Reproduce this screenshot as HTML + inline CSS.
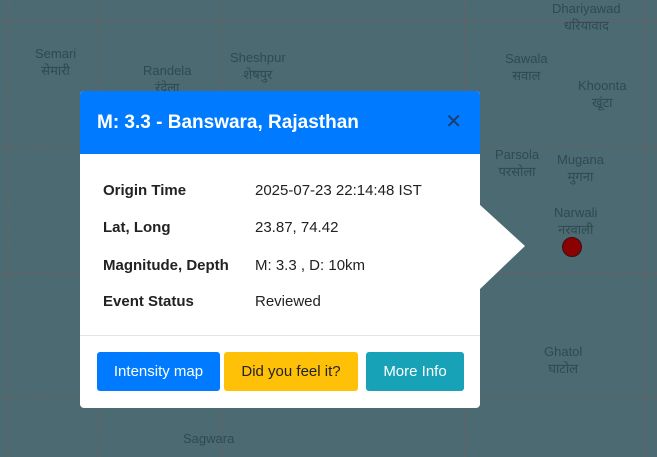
<!DOCTYPE html>
<html><head><style>
html,body{margin:0;width:657px;height:457px;overflow:hidden}
body{background:#4c6a72;font-family:"Liberation Sans","Noto Sans CJK SC",sans-serif;position:relative}
.vl{position:absolute;top:0;height:457px;border-left:1px dashed rgba(150,80,80,0.55)}
.hl{position:absolute;left:0;width:657px;border-top:1px dashed rgba(150,80,80,0.55)}
.lbl{position:absolute;color:#2f4a50;font-size:13px;text-align:center;line-height:17px}
.pop{position:absolute;left:80px;top:91px;width:400px;height:317px;background:#fff;border-radius:4px}
.hd{height:63px;background:#007bff;border-radius:4px 4px 0 0;color:#fff;font-weight:bold;font-size:19px;line-height:63px;padding-left:17px;position:relative}
.x{position:absolute;right:18px;top:0;color:#1b3d6a;font-size:20px;font-weight:normal}
.row{position:absolute;left:23px;font-size:15px;color:#222}
.row b{display:inline-block;width:152px}
.ft{position:absolute;left:0;top:244px;width:400px;border-top:1px solid #e3e3e3}
.btn{position:absolute;top:261px;height:39px;line-height:39px;border-radius:3px;font-size:15px;text-align:center}
</style></head><body>
<div class="vl" style="left:99px"></div><div class="vl" style="left:221px"></div><div class="vl" style="left:464px"></div><div class="vl" style="left:645px"></div><div class="vl" style="left:8px"></div>
<div class="hl" style="top:21px"></div><div class="hl" style="top:147px"></div><div class="hl" style="top:272px"></div><div class="hl" style="top:397px"></div>
<div class="lbl" style="left:35px;top:45px">Semari<br>सेमारी</div>
<div class="lbl" style="left:143px;top:62px">Randela<br>रंदेला</div>
<div class="lbl" style="left:230px;top:49px">Sheshpur<br>शेषपुर</div>
<div class="lbl" style="left:505px;top:50px">Sawala<br>सवाल</div>
<div class="lbl" style="left:552px;top:0px">Dhariyawad<br>धरियावाद</div>
<div class="lbl" style="left:578px;top:77px">Khoonta<br>खूंटा</div>
<div class="lbl" style="left:495px;top:146px">Parsola<br>परसोला</div>
<div class="lbl" style="left:557px;top:151px">Mugana<br>मुगना</div>
<div class="lbl" style="left:554px;top:204px">Narwali<br>नरवाली</div>
<div class="lbl" style="left:544px;top:343px">Ghatol<br>घाटोल</div>
<div class="lbl" style="left:183px;top:430px">Sagwara</div>
<div style="position:absolute;left:562px;top:237px;width:18px;height:18px;border-radius:50%;background:#8b0000;border:1px solid #3a1010"></div>
<svg style="position:absolute;left:479px;top:204px" width="48" height="88"><polygon points="0,0 46,42 0,86" fill="#fff"/></svg>
<div class="pop">
<div class="hd">M: 3.3 - Banswara, Rajasthan<span class="x">✕</span></div>
<div class="row" style="top:91px"><b>Origin Time</b>2025-07-23 22:14:48 IST</div>
<div class="row" style="top:128px"><b>Lat, Long</b>23.87, 74.42</div>
<div class="row" style="top:166px"><b>Magnitude, Depth</b>M: 3.3 , D: 10km</div>
<div class="row" style="top:202px"><b>Event Status</b>Reviewed</div>
<div class="ft"></div>
<div class="btn" style="left:17px;width:123px;background:#007bff;color:#fff">Intensity map</div>
<div class="btn" style="left:144px;width:134px;background:#ffc107;color:#222">Did you feel it?</div>
<div class="btn" style="left:286px;width:98px;background:#17a2b8;color:#fff">More Info</div>
</div>
</body></html>
